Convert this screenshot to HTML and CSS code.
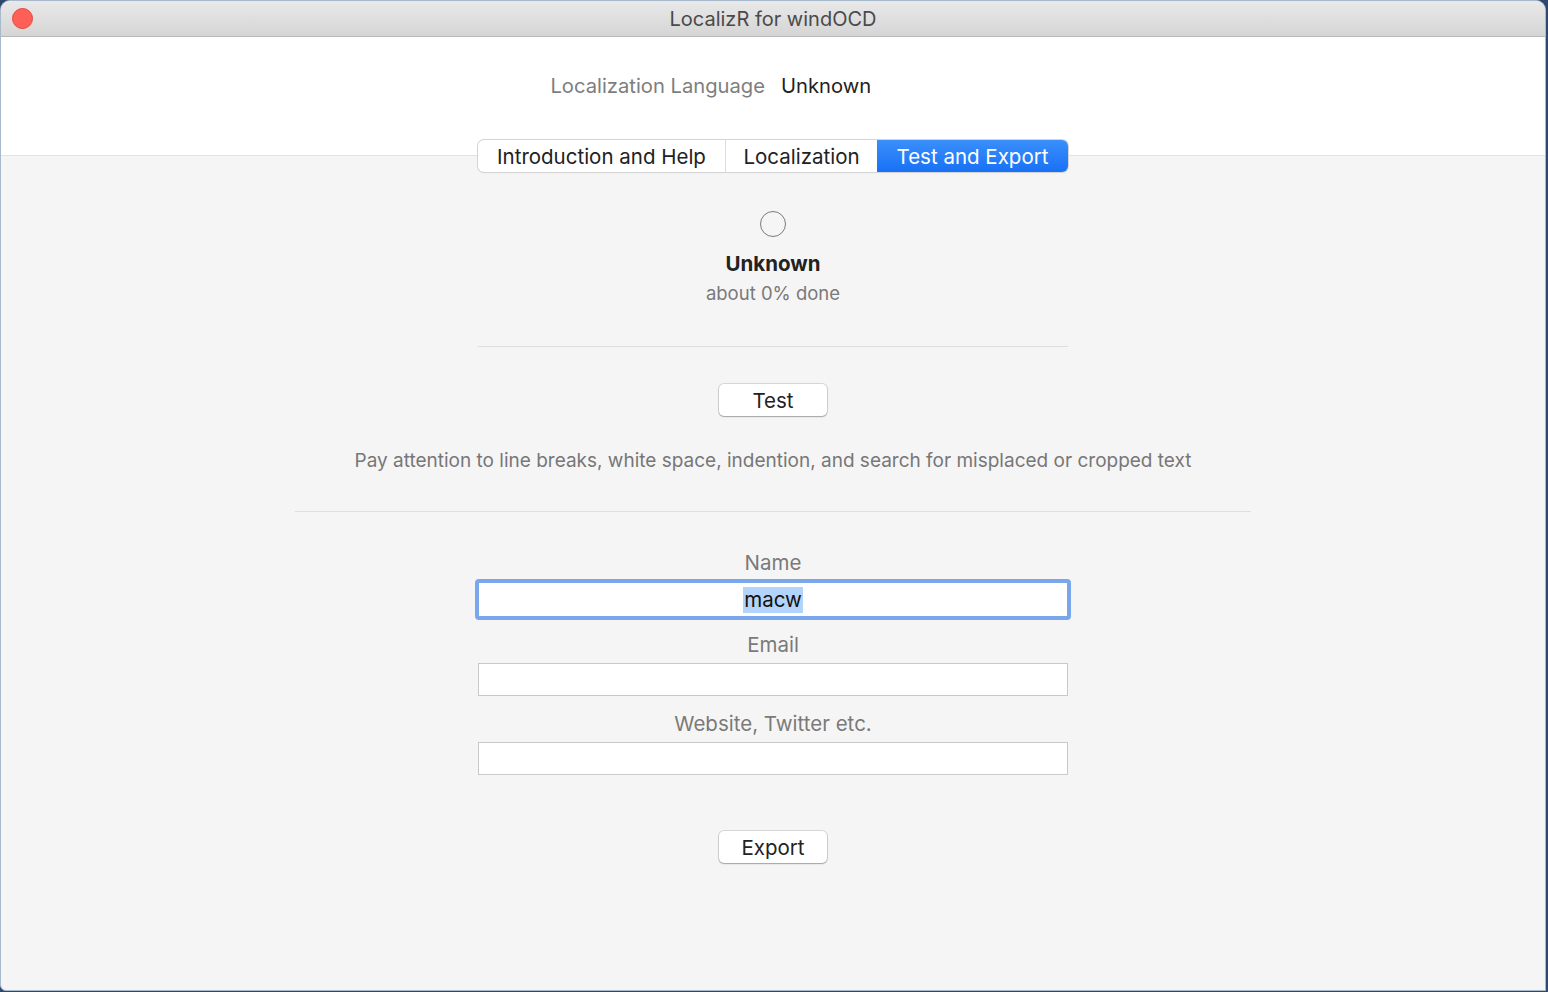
FILE: index.html
```html
<!DOCTYPE html>
<html>
<head>
<meta charset="utf-8">
<link rel="stylesheet" href="styles.css">
</head>
<body>
<div class="window">
  <div class="titlebar">
    <span class="close"></span>
    <div class="title">LocalizR for windOCD</div>
  </div>
  <div class="header">
    <div class="lang"><span class="lang-label">Localization Language</span><span class="lang-value">Unknown</span></div>
  </div>
  <div class="content">
    <div class="tabs">
      <div class="tab t1">Introduction and Help</div>
      <div class="tab t2">Localization</div>
      <div class="tab t3 active">Test and Export</div>
    </div>
    <div class="status">
      <div class="ring"></div>
      <div class="status-title">Unknown</div>
      <div class="status-sub">about 0% done</div>
    </div>
    <div class="sep short"></div>
    <div class="btn test">Test</div>
    <div class="hint">Pay attention to line breaks, white space, indention, and search for misplaced or cropped text</div>
    <div class="sep long"></div>
    <div class="form">
      <div class="label">Name</div>
      <div class="field focus"><span class="sel">macw</span></div>
      <div class="label">Email</div>
      <div class="field"></div>
      <div class="label">Website, Twitter etc.</div>
      <div class="field"></div>
    </div>
    <div class="btn export">Export</div>
  </div>
</div>
</body>
</html>
```

FILE: styles.css
```css
* { box-sizing: border-box; }
html, body { margin: 0; padding: 0; }
body {
  width: 1548px;
  height: 992px;
  background: #2d4a6e;
  font-family: Inter, "Noto Sans", "Liberation Sans", sans-serif;
  overflow: hidden;
}
.window {
  width: 1546px;
  height: 991px;
  border-radius: 10px 10px 0 6px;
  overflow: hidden;
  background: #f5f5f5;
  border: 1px solid #a9b9cc;
  display: flex;
  flex-direction: column;
}
.titlebar {
  height: 36px;
  flex: none;
  background: linear-gradient(#e9e9e9, #d5d5d5);
  border-bottom: 1px solid #b8b8b8;
  display: flex;
  align-items: center;
  justify-content: center;
  position: relative;
}
.close {
  position: absolute;
  left: 11px;
  top: 7px;
  width: 21px;
  height: 21px;
  border-radius: 50%;
  background: #fe5f57;
  border: 1px solid #e2463f;
}
.title {
  font-size: 20px;
  color: #4a4a4a;
  padding-top: 1px;
}
.header {
  height: 119px;
  flex: none;
  background: #fff;
  border-bottom: 1px solid #e3e3e3;
  padding-top: 36px;
}
.lang {
  font-size: 20.2px;
  display: grid;
  grid-template-columns: 1fr 1fr;
  column-gap: 16px;
}
.lang-label { color: #7e7e7e; text-align: right; }
.lang-value { color: #222; }
.content {
  flex: 1;
  display: flex;
  flex-direction: column;
  align-items: center;
}
.tabs {
  margin-top: -16px;
  display: flex;
  height: 32px;
  border-radius: 6px;
  background: #fff;
  box-shadow: 0 0 0 1px #d4d4d4, 0 1px 1px rgba(0,0,0,0.12);
  font-size: 20.5px;
  color: #222;
}
.tab {
  display: flex;
  align-items: center;
  justify-content: center;
}
.t1 { width: 248px; border-right: 1px solid #dcdcdc; }
.t2 { width: 151px; }
.t3 { width: 191px; }
.tab.active {
  background: linear-gradient(#3a8ffb, #1871f5);
  color: #fff;
  border-radius: 0 6px 6px 0;
}
.status {
  display: flex;
  flex-direction: column;
  align-items: center;
  margin-top: 39px;
}
.ring {
  width: 26px;
  height: 26px;
  border-radius: 50%;
  border: 1.3px solid #7a7a7a;
}
.status-title {
  margin-top: 14px;
  font-size: 20.5px;
  font-weight: 700;
  color: #222;
}
.status-sub {
  margin-top: 6px;
  font-size: 18.5px;
  color: #7a7a7a;
}
.sep { height: 1px; background: #dedede; flex: none; }
.sep.short { width: 590px; margin-top: 42px; }
.sep.long { width: 956px; margin-top: 39px; }
.btn {
  width: 108px;
  height: 32px;
  background: #fff;
  border-radius: 5px;
  box-shadow: 0 0 0 1px rgba(0,0,0,0.12), 0 1px 1.5px rgba(0,0,0,0.25);
  display: flex;
  align-items: center;
  justify-content: center;
  font-size: 20.5px;
  color: #222;
}
.btn.test { margin-top: 37px; }
.hint {
  margin-top: 33px;
  font-size: 19px;
  color: #777;
}
.form {
  width: 596px;
  display: flex;
  flex-direction: column;
  align-items: center;
  margin-top: 39px;
}
.label {
  font-size: 20.5px;
  color: #7a7a7a;
  height: 24px;
  line-height: 24px;
}
.field {
  width: 590px;
  height: 33px;
  background: #fff;
  border: 1px solid #c9c9c9;
  margin-top: 6px;
  margin-bottom: 16px;
}
.field.focus {
  width: 596px;
  height: 41px;
  border: 4px solid #7aa7ec;
  border-radius: 4px;
  margin-top: 4px;
  margin-bottom: 13px;
  display: flex;
  align-items: center;
  justify-content: center;
  font-size: 20.5px;
  color: #111;
}
.sel { background: #b2d3fa; padding: 0 1px; line-height: 26px; }
.btn.export { margin-top: 40px; }
```
